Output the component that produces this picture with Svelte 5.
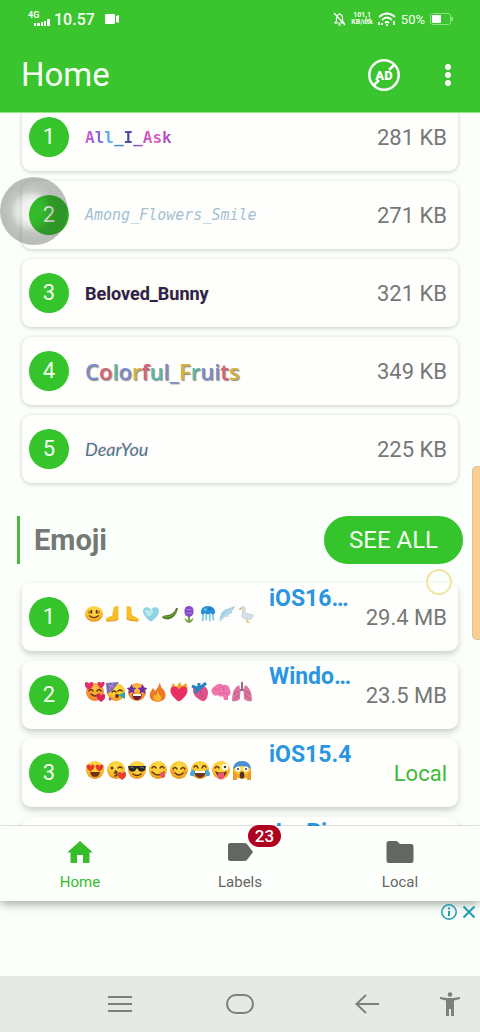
<script lang="ts">
  type Item = { id: number; name: string; size: string };
  type EmojiItem = Item & { icons: string[]; local?: boolean };

  const fonts: (Item & { style: string })[] = [
    { id: 1, name: 'All_I_Ask', size: '281 KB', style: 'ask' },
    { id: 2, name: 'Among_Flowers_Smile', size: '271 KB', style: 'flowers' },
    { id: 3, name: 'Beloved_Bunny', size: '321 KB', style: 'bunny' },
    { id: 4, name: 'Colorful_Fruits', size: '349 KB', style: 'fruits' },
    { id: 5, name: 'DearYou', size: '225 KB', style: 'dear' }
  ];

  const emojis: EmojiItem[] = [
    {
      id: 1, name: 'iOS16…', size: '29.4 MB',
      icons: ['shaking', 'pushLeft', 'pushRight', 'blueHeart', 'pea', 'hyacinth', 'jellyfish', 'wing', 'goose']
    },
    {
      id: 2, name: 'Windo…', size: '23.5 MB',
      icons: ['hearts', 'party', 'starEyes', 'fire', 'fireHeart', 'organ', 'brain', 'lungs']
    },
    {
      id: 3, name: 'iOS15.4', size: 'Local', local: true,
      icons: ['heartEyes', 'kiss', 'cool', 'yum', 'blush', 'joy', 'wink', 'scream']
    },
    { id: 4, name: 'JoyPi…', size: '', icons: [] }
  ];

  const face = '<circle cx="10" cy="10" r="9" fill="url(#face)"/>';
  const heart = (x: number, y: number, s: number, fill: string) =>
    `<path transform="translate(${x} ${y}) scale(${s})" fill="${fill}" d="M0 4C-6 0-5-4-2.5-4C-1-4 0-3 0-2C0-3 1-4 2.5-4C5-4 6 0 0 4Z"/>`;
  const star = (x: number) =>
    `<path transform="translate(${x} 7)" fill="#6c2fa8" d="M0-5L1.500-1.500L5-1L2.300 1.300L3 5L0 3L-3 5L-2.300 1.300L-5-1L-1.500-1.500Z"/>`;

  // Emoji artwork, drawn on a 20 x 20 grid
  const art: Record<string, string> = {
    shaking: `<ellipse cx="10" cy="10" rx="10" ry="8.500" fill="url(#face)"/><g fill="#5b3210"><ellipse cx="7" cy="7.500" rx="1.200" ry="2.200"/><ellipse cx="13" cy="7.500" rx="1.200" ry="2.200"/></g><g fill="#a86e1c"><ellipse cx="4.500" cy="8" rx=".8" ry="2"/><ellipse cx="15.500" cy="8" rx=".8" ry="2"/></g><path d="M5 12Q10 16 15 12" class="ink"/>`,
    pushLeft: '<path d="M11 2L16 1L16 14Q16 18 12 17L3 18Q0 16 4 14L9 12Z" fill="#f7bd22"/><path d="M3 18L13 17.500L16 15" stroke="#d98a18" fill="none"/>',
    pushRight: '<path d="M4 1L9 2L10 11L17 15Q19 18 15 18L7 17Q3 17 4 13Z" fill="#f9bd25"/><path d="M4 15L8 17L17 18" stroke="#d98a18" fill="none"/>',
    blueHeart: heart(10, 10.500, 2, '#8fd3e2') + heart(8, 9, 1, '#b9e8f0'),
    pea: '<path d="M1 13Q2 16 8 16Q16 15 19 4L17 3Q14 10 8 11Q3 11 1 13Z" fill="#4f7c24"/><path d="M2 13Q12 15 17 6" stroke="#84ad3c" fill="none"/>',
    hyacinth: '<path d="M10 9V19" stroke="#5b9138" stroke-width="2"/><path d="M5 14Q10 20 15 14Q14 20 10 20Q6 20 5 14Z" fill="#79a847"/><rect x="5" y="1" width="10" height="12" rx="5" fill="#874bc8"/><path d="M7 5H13M7 9H13" stroke="#b184e2"/>',
    jellyfish: '<path d="M5 9L4 18M8 9V17M12 9V18M15 9L16 17" stroke="#83cbe8" stroke-width="2"/><path d="M2 9Q2 1 10 1Q18 1 18 9Q15 12 13 9Q10 12 7 9Q4 12 2 9Z" fill="#248ed8"/><circle cx="7" cy="5" r="1.500" fill="#68c5ef"/><circle cx="12" cy="4" r="1.200" fill="#1767bb"/>',
    wing: '<path d="M2 19Q1 9 8 5L19 1Q18 5 15 7L16 9L12 10L12 13L8 13Z" fill="#a9cfe4"/><path d="M3 17L15 4M6 14L13 10" stroke="#d1e7f2" fill="none"/>',
    goose: '<path d="M4 3Q7 0 9 3L9 9L18 11Q17 17 11 16Q3 15 6 9L6 5Z" fill="#d5e0e7" stroke="#b5c3cc" stroke-width=".7"/><path d="M4.500 3L1 5L5 5Z" fill="#e99a35"/><path d="M11 16V19H14" stroke="#e99a35" fill="none"/>',
    hearts: face.replace('#face', '#hot') + '<path d="M4 9Q6 6 8 9M12 9Q14 6 16 9M6 12Q10 16 14 12" class="ink"/>' + heart(4, 4, 1, '#e52e67') + heart(16, 3, .8, '#e52e67') + heart(16, 16, 1, '#df2459'),
    party: face + '<path d="M0 1L13 0L7 8L1 12Z" fill="#796db9"/><path d="M2 3L8 5M3 8L7 1" stroke="#bc8cca"/><path d="M6 10Q8 8 10 10M12 9Q14 7 16 9" class="ink"/><circle cx="11" cy="14" r="2" fill="#713019"/><path d="M12 13L19 10V17Z" fill="#33a5a6"/><circle cx="4" cy="17" r="1.500" fill="#c2408f"/>',
    starEyes: face.replace('#face', '#hot') + star(4.500) + star(15.500) + '<path d="M5 12H15Q14 18 10 18Q6 18 5 12Z" fill="#6b1b3b"/><path d="M6 12H14V14H6Z" fill="#fff"/>',
    fire: '<path d="M12 0Q12 5 16 8Q21 18 10 20Q0 19 2 11L5 6L7 9Q11 5 12 0Z" fill="#ee7825"/><path d="M10 8Q10 12 13 14Q14 20 9 19Q4 18 6 13L8 14Z" fill="#ffb52d"/>',
    fireHeart: '<path d="M2 10Q1 6 4 1L7 5L11 0L13 4L17 1Q20 7 17 10Z" fill="#f6a62c"/>' + heart(10, 12, 1.900, '#e92f61'),
    organ: '<path d="M3 8Q3 3 9 5L14 4Q20 7 17 16Q15 21 10 18Q3 14 3 8Z" fill="#e1518a"/><path d="M2 4L9 7L9 1M9 7L16 1M8 7L5 11" stroke="#2783c4" stroke-width="3" fill="none"/><path d="M10 10L13 15" stroke="#b8488c" fill="none"/>',
    brain: '<path d="M1 11Q-1 7 4 4Q8 0 12 3Q18 2 19 8Q21 13 17 14L17 18L13 18L12 14Q9 16 7 13Q3 15 1 11Z" fill="#ef77ab"/><path d="M3 8Q7 5 8 9M9 5Q13 4 13 9M7 12Q12 9 17 12" stroke="#e25f99" fill="none"/>',
    lungs: '<path d="M10 0V9M10 7L6 10M10 7L14 10" stroke="#9f6584" stroke-width="2" fill="none"/><path d="M7 3Q9 7 8 17Q5 20 0 19Q0 6 7 3ZM13 3Q11 7 12 17Q15 20 20 19Q20 6 13 3Z" fill="#dc759e"/><path d="M2 12L7 9M2 17L7 13M13 9L18 12M13 13L18 17" stroke="#b95680"/>',
    heartEyes: face + heart(5.500, 8, .9, '#e53b28') + heart(14.500, 8, .9, '#e53b28') + '<path d="M5 12H15Q14 17 10 17Q6 17 5 12Z" fill="#703016"/>',
    kiss: face + '<circle cx="6" cy="8" r="1.500" fill="#653713"/><path d="M12 8Q14 6 16 8M9 11Q13 12 9 13Q13 15 9 16" class="ink"/>' + heart(16, 16, 1, '#e4412f'),
    cool: face + '<path d="M1 6H19L18 10Q16 13 12 11L10 8L8 11Q4 13 2 10Z" fill="#25262a"/><path d="M3 7L7 8M13 7L17 8" stroke="#6c7174"/><path d="M6 14Q10 17 14 14" class="ink"/>',
    yum: face + '<path d="M4 8Q6 5 8 8M12 8Q14 5 16 8M4 12Q10 18 16 12" class="ink"/><path d="M12 13L16 12Q19 17 15 18Q12 18 12 13Z" fill="#eb5262"/>',
    blush: face + '<g fill="#f28b32" opacity=".7"><circle cx="4" cy="12" r="2"/><circle cx="16" cy="12" r="2"/></g><path d="M4 9Q6 6 8 9M12 9Q14 6 16 9M6 13Q10 17 14 13" class="ink"/>',
    joy: face + '<path d="M4 7Q6 4 8 8M12 8Q14 4 16 7" class="ink"/><path d="M4 11H16Q15 18 10 18Q5 18 4 11Z" fill="#70351a"/><path d="M5 11H15V13H5Z" fill="#fff"/><path d="M4 9Q-1 12 0 15Q3 18 5 14ZM16 9Q21 12 20 15Q17 18 15 14Z" fill="#43a8e0"/>',
    wink: face + '<path d="M4 8Q6 5 8 8" class="ink"/><circle cx="14" cy="7" r="3.200" fill="#fff"/><circle cx="14" cy="7" r="1.300" fill="#4d352a"/><path d="M4 11Q10 14 16 11Q15 17 10 17Q6 17 4 11Z" fill="#70351a"/><path d="M7 13H13V18Q10 21 7 18Z" fill="#ef5578"/>',
    scream: face + '<path d="M1 9Q2 1 10 1Q18 1 19 9Q10 3 1 9Z" fill="#4a8fd8"/><circle cx="6" cy="9" r="2.600" fill="#fff"/><circle cx="14" cy="9" r="2.600" fill="#fff"/><circle cx="6" cy="9" r="1" fill="#432b20"/><circle cx="14" cy="9" r="1" fill="#432b20"/><ellipse cx="10" cy="15" rx="2.300" ry="3.500" fill="#523024"/><path d="M1 11Q5 13 5 20H1ZM19 11Q15 13 15 20H19Z" fill="#e99a25"/>'
  };
</script>

<svg class="defs" width="0" height="0" aria-hidden="true">
  <defs>
    <radialGradient id="face" cx=".5" cy=".3" r=".7">
      <stop offset="0" stop-color="#ffe04a" />
      <stop offset=".6" stop-color="#fcc631" />
      <stop offset="1" stop-color="#e8931c" />
    </radialGradient>
    <radialGradient id="hot" cx=".5" cy=".3" r=".7">
      <stop offset="0" stop-color="#ffc73c" />
      <stop offset="1" stop-color="#f07d2f" />
    </radialGradient>
  </defs>
</svg>

<div class="app">
  <header>
    <div class="status">
      <div class="network">
        <span>4G</span>
        <svg width="16" height="7" viewBox="0 0 16 7" fill="#fff"><path d="M0 4h2v3H0zM3 4h3v3H3zM7 3h2v4H7zM10 2h2v5h-2zM13 0h3v7h-3z" /></svg>
      </div>
      <time>10.57</time>
      <svg class="camera" width="14" height="10" viewBox="0 0 14 10" fill="#fff"><rect width="10" height="10" rx="1" /><path d="M11 2l3-1v8l-3-1z" /></svg>
      <div class="status-right">
        <svg width="13" height="14" viewBox="0 0 13 14" fill="none" stroke="#fff" stroke-width="1.2"><path d="M2 11h9L9.500 9V5.500Q9.500 2.500 6.500 2.500T3.500 5.500V9zM5 13h3M6.500 1v1M1 1l11 12" /></svg>
        <div class="speed"><span>101,1</span><span>KB/dtk</span></div>
        <svg width="18" height="14" viewBox="0 0 18 14" fill="none" stroke="#fff" stroke-width="1.800"><path d="M1 5Q9-2 17 5M4 8Q9 3 14 8M7 11Q9 9 11 11" /><path d="M1 10v3M4 11v2M16 9v4M9 12v2" /></svg>
        <span class="percent">50%</span>
        <svg width="24" height="12" viewBox="0 0 24 12"><rect x=".5" y=".5" width="20" height="11" rx="2.500" fill="none" stroke="#8be081" /><rect x="2" y="2" width="9" height="8" rx="1" fill="#fff" /><path d="M22 4v4" stroke="#8be081" stroke-width="2" /></svg>
      </div>
    </div>
    <div class="app-bar">
      <h1>Home</h1>
      <button class="icon-button" aria-label="Remove ads">
        <svg width="32" height="32" viewBox="0 0 32 32">
          <circle cx="16" cy="16" r="14.700" fill="none" stroke="#fff" stroke-width="2.500" />
          <path d="M26 6l-5 5M11 21l-5 5" stroke="#fff" stroke-width="2.500" />
          <text x="16" y="21" text-anchor="middle" fill="#fff" font-size="13" font-weight="900">AD</text>
        </svg>
      </button>
      <button class="icon-button" aria-label="More options">
        <svg width="8" height="24" viewBox="0 0 8 24" fill="#fff"><circle cx="4" cy="4" r="3" /><circle cx="4" cy="12" r="3" /><circle cx="4" cy="20" r="3" /></svg>
      </button>
    </div>
  </header>

  <main>
    <ul class="cards">
      {#each fonts as font (font.id)}
        <li class="card">
          <span class="number">{font.id}</span>
          <span class="preview {font.style}">
            {#if font.style === 'fruits'}
              {#each font.name as letter}<span>{letter}</span>{/each}
            {:else}
              {font.name}
            {/if}
          </span>
          <span class="size">{font.size}</span>
        </li>
      {/each}
    </ul>

    <div class="section-title">
      <h2>Emoji</h2>
      <button class="see-all">SEE ALL</button>
    </div>

    <ul class="cards emoji-cards">
      {#each emojis as emoji (emoji.id)}
        <li class="card">
          <span class="number">{emoji.id}</span>
          <span class="emoji-row">
            {#each emoji.icons as icon}
              <svg viewBox="0 0 20 20">{@html art[icon]}</svg>
            {/each}
          </span>
          <span class="name">{emoji.name}</span>
          <span class="size" class:local={emoji.local}>{emoji.size}</span>
        </li>
      {/each}
    </ul>
  </main>

  <nav class="tabs">
    <a href="#home" class="active">
      <svg width="26" height="24" viewBox="0 0 26 24" fill="currentColor"><path d="M13 1L26 12.500h-3.500V23H16v-8h-6v8H3.500V12.500H0z" /></svg>
      Home
    </a>
    <a href="#labels">
      <span class="tab-icon">
        <svg width="26" height="24" viewBox="0 0 26 24" fill="currentColor"><path d="M3 3h14q2 0 3 1l6 8-6 8q-1 1-3 1H3q-2 0-2-2V5q0-2 2-2z" /></svg>
        <span class="badge">23</span>
      </span>
      Labels
    </a>
    <a href="#local">
      <svg width="28" height="24" viewBox="0 0 28 24" fill="currentColor"><path d="M3 1h8l3 3h11q2.500 0 2.500 2.500v14Q27.500 23 25 23H3Q.5 23 .5 20.500v-17Q.5 1 3 1z" /></svg>
      Local
    </a>
  </nav>

  <aside class="ad">
    <button class="icon-button" aria-label="Ad info">
      <svg width="16" height="16" viewBox="0 0 16 16" fill="none" stroke="currentColor" stroke-width="1.500"><circle cx="8" cy="8" r="7.200" /><path d="M8 7v5M8 3.500v2" stroke-width="2" /></svg>
    </button>
    <button class="icon-button" aria-label="Close ad">
      <svg width="14" height="14" viewBox="0 0 14 14" fill="none" stroke="currentColor" stroke-width="2"><path d="M1.500 1.500l11 11M12.500 1.500l-11 11" /></svg>
    </button>
  </aside>

  <footer>
    <button class="icon-button" aria-label="Recent apps">
      <svg width="24" height="18" viewBox="0 0 24 18" stroke="currentColor" stroke-width="2"><path d="M0 2h24M0 9h24M0 16h24" /></svg>
    </button>
    <button class="icon-button" aria-label="Home screen">
      <svg width="28" height="20" viewBox="0 0 28 20" fill="none" stroke="currentColor" stroke-width="2"><rect x="1" y="1" width="26" height="18" rx="9" /></svg>
    </button>
    <button class="icon-button" aria-label="Back">
      <svg width="24" height="20" viewBox="0 0 24 20" fill="none" stroke="currentColor" stroke-width="2"><path d="M24 10H1.500M11 1L1.500 10L11 19" /></svg>
    </button>
    <button class="icon-button" aria-label="Accessibility">
      <svg width="20" height="24" viewBox="0 0 20 24" fill="currentColor"><circle cx="10" cy="2.500" r="2.300" /><path d="M0 5l7 1h6l7-1v2l-6 1.500V24h-3v-7H9v7H6V8.500L0 7z" /></svg>
    </button>
  </footer>

  <button class="assistive" aria-label="Assistive touch"></button>
  <span class="touch-ring"></span>
  <span class="edge-panel"></span>
</div>

<style>
  :global(body) {
    margin: 0;
    background: #fbfffb;
  }

  .app {
    position: relative;
    display: flex;
    flex-direction: column;
    height: 100vh;
    overflow: hidden;
    color: #757875;
    background: #fbfffb;
    font-family: Roboto, "Liberation Sans", sans-serif;
  }

  .defs {
    position: absolute;
  }

  svg {
    display: block;
    flex: none;
  }

  h1,
  h2,
  ul {
    margin: 0;
    padding: 0;
    list-style: none;
  }

  button {
    border: 0;
    font-family: inherit;
    cursor: pointer;
  }

  .icon-button {
    display: flex;
    align-items: center;
    justify-content: center;
    padding: 0;
    color: inherit;
    background: none;
  }

  header {
    flex: none;
    z-index: 1;
    color: #f6fff5;
    background: #3ac42d;
    border-bottom: 1px solid #8eea83;
  }

  .status {
    display: flex;
    align-items: center;
    height: 38px;
    padding: 0 26px 0 28px;
    font-size: 16px;
  }

  .network {
    display: flex;
    flex-direction: column;
    width: 22px;
    margin-right: 4px;
    font-size: 9px;
    font-weight: 700;
    line-height: 7px;
  }

  .network svg {
    align-self: flex-end;
  }

  time {
    font-weight: 500;
  }

  .camera {
    margin-left: 10px;
  }

  .status-right {
    display: flex;
    align-items: center;
    gap: 5px;
    margin-left: auto;
  }

  .speed {
    display: flex;
    flex-direction: column;
    align-items: center;
    font-size: 7px;
    font-weight: 700;
    line-height: 7px;
  }

  .percent {
    font-size: 13px;
  }

  .app-bar {
    display: flex;
    align-items: center;
    gap: 44px;
    height: 74px;
    padding: 0 28px 0 21px;
  }

  h1 {
    flex: 1;
    font-size: 33px;
    font-weight: 400;
    line-height: 40px;
  }

  main {
    flex: 1;
    min-height: 0;
    overflow: hidden;
  }

  .cards {
    display: flex;
    flex-direction: column;
    gap: 10px;
    margin: 0 22px;
  }

  /* list is scrolled a little under the app bar */
  .cards:first-child {
    margin-top: -10px;
  }

  .card {
    display: flex;
    align-items: center;
    gap: 12px;
    box-sizing: border-box;
    height: 68px;
    padding: 0 11px 0 7px;
    background: #fefffd;
    border-radius: 9px;
    box-shadow: 0 1px 4px rgba(0, 0, 0, 0.2);
  }

  .emoji-cards .card {
    box-shadow: 0 3px 6px rgba(0, 0, 0, 0.2);
  }

  .number {
    flex: none;
    width: 40px;
    height: 40px;
    margin-right: 4px;
    border-radius: 50%;
    color: #f4fff3;
    background: #35c42b;
    font-size: 22px;
    line-height: 40px;
    text-align: center;
  }

  .preview {
    flex: 1;
    white-space: nowrap;
  }

  .size {
    margin-left: auto;
    font-size: 22px;
    white-space: nowrap;
  }

  .size.local {
    color: #3dbb34;
  }

  .ask {
    flex: none;
    font: 700 16px "DejaVu Sans Mono", monospace;
    color: transparent;
    background: linear-gradient(90deg, #e060cf, #8a5be0 14%, #4bbbe0 30%, #4a4a9c 50%, #9b55d8 64%, #ee5abf 76%, #9a4cc4);
    background-clip: text;
  }

  .flowers {
    font: italic 15px "DejaVu Sans Mono", monospace;
    color: #a3c0d3;
  }

  .bunny {
    color: #2d1f5e;
    font-size: 18px;
    font-weight: 700;
    text-shadow: 0 0 2px #efe579;
  }

  .fruits {
    font: 600 22px "Open Sans", sans-serif;
    color: #7f8bd0;
    text-shadow: 1px 1px 1px #85887f;
  }

  .fruits span:nth-child(4n + 2) {
    color: #d6627c;
  }

  .fruits span:nth-child(4n + 3) {
    color: #5db9ac;
  }

  .fruits span:nth-child(5n) {
    color: #d3b040;
  }

  .dear {
    font: italic 18px Lato, sans-serif;
    color: #4a7a86;
    text-shadow: 0 -1px 2px #f9cbea;
  }

  .section-title {
    display: flex;
    align-items: center;
    justify-content: space-between;
    margin: 33px 17px 19px;
  }

  h2 {
    padding-left: 14px;
    border-left: 3px solid #46bd3a;
    font-size: 29px;
    font-weight: 700;
    line-height: 48px;
  }

  .see-all {
    height: 48px;
    padding: 0 25px;
    border-radius: 24px;
    color: #f2fff1;
    background: #35c42b;
    font-size: 24px;
  }

  .emoji-row {
    display: flex;
    flex: none;
    gap: 1px;
    width: 172px;
    padding-bottom: 6px;
  }

  .emoji-row svg {
    width: 20px;
    height: 20px;
  }

  .emoji-cards .card:first-child svg {
    width: 18px;
    height: 18px;
  }

  .emoji-row :global(.ink) {
    fill: none;
    stroke: #67340f;
    stroke-width: 1.5;
    stroke-linecap: round;
  }

  .name {
    align-self: flex-start;
    flex: none;
    width: 84px;
    color: #2b95df;
    font-size: 23px;
    font-weight: 700;
    line-height: 32px;
    white-space: nowrap;
  }

  .tabs {
    display: flex;
    flex: none;
    z-index: 1;
    height: 75px;
    background: #fdfffc;
    box-shadow: 0 2px 10px rgba(0, 0, 0, 0.4);
    clip-path: inset(-1px 0 -20px);
  }

  .tabs a {
    display: flex;
    flex: 1;
    flex-direction: column;
    align-items: center;
    justify-content: center;
    gap: 8px;
    padding-top: 4px;
    color: #636663;
    font-size: 15px;
    line-height: 20px;
    text-decoration: none;
  }

  .tabs a.active {
    color: #35bd2c;
  }

  .tab-icon {
    position: relative;
  }

  .badge {
    position: absolute;
    top: -15px;
    left: 21px;
    width: 33px;
    border-radius: 11px;
    color: #fff;
    background: #b00020;
    font-size: 17px;
    font-weight: 500;
    line-height: 22px;
    text-align: center;
  }

  .ad {
    display: flex;
    flex: none;
    align-items: flex-start;
    justify-content: flex-end;
    gap: 5px;
    box-sizing: border-box;
    height: 75px;
    padding: 3px 4px;
    color: #219bb0;
    z-index: 2;
  }

  .ad .icon-button {
    height: 16px;
  }

  footer {
    display: grid;
    flex: none;
    grid-template-columns: 120fr 120fr 134fr 32fr;
    height: 56px;
    padding: 0 14px 0 60px;
    color: #7d807d;
    background: #e6e9e4;
  }

  .assistive {
    position: absolute;
    top: 177px;
    left: 0;
    z-index: 3;
    width: 68px;
    height: 68px;
    padding: 0;
    border-radius: 50%;
    background: radial-gradient(circle at 46% 50%, rgba(30, 40, 30, 0.06) 20%, rgba(30, 40, 30, 0.14) 32%, rgba(30, 40, 30, 0.26) 42%, rgba(30, 40, 30, 0.3) 56%);
  }

  .touch-ring {
    position: absolute;
    top: 569px;
    right: 28px;
    box-sizing: border-box;
    width: 26px;
    height: 26px;
    border: 2px solid #f1e3a0;
    border-radius: 50%;
  }

  .edge-panel {
    position: absolute;
    top: 466px;
    right: 0;
    box-sizing: border-box;
    width: 8px;
    height: 174px;
    border: 1px solid #d9c193;
    border-right: 0;
    border-radius: 5px 0 0 5px;
    background: #f8cf91;
  }
</style>
